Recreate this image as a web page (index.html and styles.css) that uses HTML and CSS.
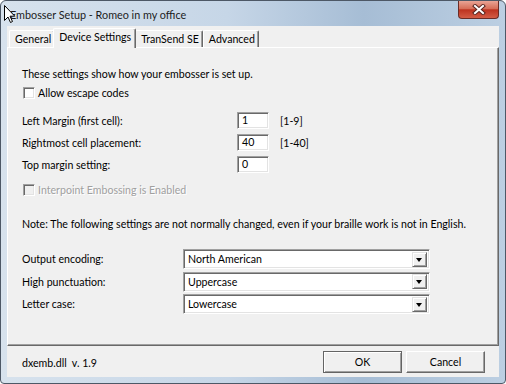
FILE: index.html
```html
<!DOCTYPE html>
<html lang="en">
<head>
    <meta charset="UTF-8">
    <title>Embosser Setup - Romeo in my office</title>
    <link rel="stylesheet" href="styles.css">
</head>
<body>
    <div class="window">
        <div class="titlebar">
            <span class="title">Embosser Setup - Romeo in my office</span>
            <div class="close">
                <svg width="14" height="11" viewBox="0 0 14 11">
                    <path d="M3 2 L11 9 M11 2 L3 9" stroke="#5a2620" stroke-width="4" stroke-linecap="square"/>
                    <path d="M3 2 L11 9 M11 2 L3 9" stroke="#fff" stroke-width="2" stroke-linecap="square"/>
                </svg>
            </div>
        </div>

        <div class="client">
            <div class="tabs">
                <div class="tab">General</div>
                <div class="tab active">Device Settings</div>
                <div class="tab">TranSend SE</div>
                <div class="tab">Advanced</div>
            </div>

            <div class="panel">
                <div class="intro">These settings show how your embosser is set up.</div>
                <div class="check"><span class="box"></span>Allow escape codes</div>

                <div class="field-row first">
                    <span class="field-label">Left Margin (first cell):</span>
                    <span class="input">1</span>
                    <span class="range">[1-9]</span>
                </div>
                <div class="field-row">
                    <span class="field-label">Rightmost cell placement:</span>
                    <span class="input">40</span>
                    <span class="range">[1-40]</span>
                </div>
                <div class="field-row">
                    <span class="field-label">Top margin setting:</span>
                    <span class="input">0</span>
                </div>

                <div class="check disabled"><span class="box"></span>Interpoint Embossing is Enabled</div>

                <div class="note">Note: The following settings are not normally changed, even if your braille work is not in English.</div>

                <div class="select-row first">
                    <span class="select-label">Output encoding:</span>
                    <div class="select"><span class="value">North American</span><span class="arrow"></span></div>
                </div>
                <div class="select-row">
                    <span class="select-label">High punctuation:</span>
                    <div class="select"><span class="value">Uppercase</span><span class="arrow"></span></div>
                </div>
                <div class="select-row">
                    <span class="select-label">Letter case:</span>
                    <div class="select"><span class="value">Lowercase</span><span class="arrow"></span></div>
                </div>
            </div>

            <div class="footer">
                <span class="version">dxemb.dll&nbsp; v. 1.9</span>
                <div class="buttons">
                    <button class="btn default">OK</button>
                    <button class="btn">Cancel</button>
                </div>
            </div>
        </div>

        <!-- mouse pointer sitting over the title -->
        <svg class="cursor" width="12" height="19" viewBox="0 0 12 19">
            <path d="M0.5 0.5 L0.5 15.5 L4 12 L6.5 17.5 L8.5 16.5 L6 11.2 L10.8 11.2 Z" fill="#fff" stroke="#000" stroke-width="1" stroke-linejoin="round"/>
        </svg>
    </div>
</body>
</html>
```

FILE: styles.css
```css
* {
    box-sizing: border-box;
}

body {
    margin: 0;
    font-family: Lato, "Liberation Sans", sans-serif;
    font-size: 10.6px;
    color: #000;
}

.window {
    position: relative;
    width: 506px;
    height: 384px;
    padding: 0 6px 6px;
    border: 1px solid #4d5866;
    border-radius: 6px 6px 4px 4px;
    background: linear-gradient(to right, #d7e2ed, #c6d6e7 45%, #a6bdd5 72%, #bccfe2);
    display: flex;
    flex-direction: column;
    overflow: hidden;
}

.titlebar {
    height: 25px;
    display: flex;
    justify-content: space-between;
}

.title {
    font-size: 10.8px;
    line-height: 27px;
    padding-left: 3px;
    color: #1b1b1b;
}

.close {
    width: 41px;
    height: 18px;
    border: 1px solid #6a2c26;
    border-top: none;
    border-radius: 0 0 4px 4px;
    background: linear-gradient(#e9a495, #d66e58 45%, #bd3320 52%, #d35c45);
    display: flex;
    align-items: center;
    justify-content: center;
}

.client {
    flex: 1;
    background: #f0f0f0;
    display: flex;
    flex-direction: column;
}

.tabs {
    height: 21px;
    padding-left: 2px;
    display: flex;
    align-items: flex-end;
}

.tab {
    height: 17px;
    padding: 0 3px 0 5px;
    line-height: 16px;
    border: 1px solid #fff;
    border-right-color: #696969;
    border-bottom: none;
    border-radius: 2px 2px 0 0;
    box-shadow: inset -1px 0 0 #a0a0a0;
}

.tab.active {
    position: relative;
    z-index: 1;
    height: 20px;
    margin: 0 -1px -1px -2px;
    padding: 0 4px 0 5px;
    line-height: 17px;
    background: #f0f0f0;
}

.panel {
    height: 299px;
    padding: 18px 14px 0;
    border: 1px solid;
    border-color: #fff #696969 #696969 #fff;
    box-shadow: inset -1px -1px 0 #a0a0a0;
}

.intro {
    line-height: 16px;
}

.check {
    margin-top: 3px;
    padding-left: 1px;
    line-height: 16px;
    display: flex;
    align-items: center;
}

.box {
    width: 12px;
    height: 12px;
    margin-right: 3px;
    background: #fff;
    border: 1px solid;
    border-color: #a0a0a0 #fff #fff #a0a0a0;
    box-shadow: inset 1px 1px 0 #696969, inset -1px -1px 0 #e3e3e3;
}

.check.disabled {
    margin-top: 9px;
    color: #a0a0a0;
    text-shadow: 1px 1px 0 #fff;
}

.check.disabled .box {
    background: #f0f0f0;
}

.field-row {
    height: 17px;
    margin-top: 5px;
    display: flex;
    align-items: center;
}

.field-row.first {
    margin-top: 11px;
}

.field-label {
    width: 215px;
}

.input {
    width: 32px;
    height: 17px;
    padding-left: 4px;
    line-height: 14px;
    background: #fff;
    border: 1px solid;
    border-color: #a0a0a0 #fff #fff #a0a0a0;
    box-shadow: inset 1px 1px 0 #696969, inset -1px -1px 0 #e3e3e3;
}

.range {
    margin-left: 11px;
}

.note {
    margin-top: 18px;
    line-height: 16px;
}

.select-row {
    height: 20px;
    margin-top: 2.5px;
    display: flex;
    align-items: center;
}

.select-row.first {
    margin-top: 17px;
}

.select-label {
    width: 161px;
}

.select {
    width: 247px;
    height: 20px;
    padding: 2px;
    background: #fff;
    border: 1px solid;
    border-color: #a0a0a0 #fff #fff #a0a0a0;
    box-shadow: inset 1px 1px 0 #696969, inset -1px -1px 0 #e3e3e3;
    display: flex;
    align-items: center;
}

.select .value {
    flex: 1;
    padding-left: 2px;
}

.arrow {
    width: 15px;
    height: 15px;
    background: #f0f0f0;
    border: 1px solid;
    border-color: #e3e3e3 #696969 #696969 #e3e3e3;
    box-shadow: inset 1px 1px 0 #fff, inset -1px -1px 0 #a0a0a0;
    position: relative;
}

.arrow::after {
    content: "";
    position: absolute;
    left: 3px;
    top: 5px;
    border-left: 3.5px solid transparent;
    border-right: 3.5px solid transparent;
    border-top: 4px solid #000;
}

.footer {
    flex: 1;
    padding: 0 14px 0 15px;
    display: flex;
    align-items: center;
}

.version {
    padding-top: 3px;
}

.buttons {
    margin-left: auto;
    display: flex;
    gap: 4px;
}

.btn {
    width: 79px;
    height: 22px;
    padding: 0;
    font-family: inherit;
    font-size: 10.6px;
    color: #000;
    background: #f0f0f0;
    border: 1px solid;
    border-color: #fff #696969 #696969 #fff;
    box-shadow: inset -1px -1px 0 #a0a0a0;
}

.btn.default {
    border-color: #646464;
    box-shadow: inset 1px 1px 0 #fff, inset -1px -1px 0 #a0a0a0;
}

.cursor {
    position: absolute;
    left: 3px;
    top: 4px;
}
```
